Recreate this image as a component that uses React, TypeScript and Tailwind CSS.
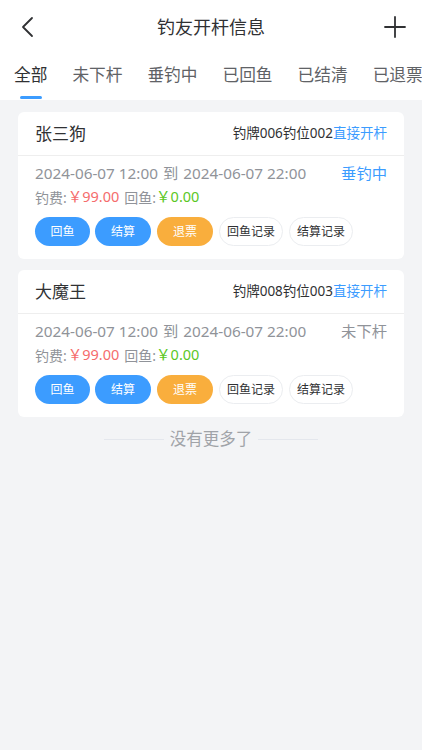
import React from "react";

const font = { fontFamily: '"Noto Sans", "Noto Sans CJK SC", sans-serif' };

function Card({ name, info, status, statusClass }: { name: string; info: string; status: string; statusClass: string }) {
  return (
    <div className="mx-[18px] bg-white rounded-md">
      <div className="h-[44px] flex items-center justify-between px-[17px] border-b border-[#eeeeee]">
        <span className="text-[17px] text-[#303133]">{name}</span>
        <span className="text-[13.5px] text-[#303133]">
          {info}
          <span className="text-[#3c9cff]">直接开杆</span>
        </span>
      </div>
      <div className="px-[17px] pt-[6px] pb-[13px]">
        <div className="flex items-center justify-between h-[22px] text-[15.3px] text-[#909399]">
          <span>
            2024-06-07 12:00<span className="mx-[5px]">到</span>2024-06-07 22:00
          </span>
          <span className={statusClass}>{status}</span>
        </div>
        <div className="h-[26px] flex items-center text-[14px] text-[#909399]">
          <span>钓费:</span>
          <span className="text-[#f56c6c] ml-[1px] text-[14.5px]">￥99.00</span>
          <span className="ml-[5px]">回鱼:</span>
          <span className="text-[#5ac725] text-[14.5px]">￥0.00</span>
        </div>
        <div className="flex mt-[7px]">
          <button className="h-[29px] w-[55px] rounded-full bg-[#3c9cff] text-white text-[12px]">回鱼</button>
          <button className="ml-[5px] h-[29px] w-[56px] rounded-full bg-[#3c9cff] text-white text-[12px]">结算</button>
          <button className="ml-[6px] h-[29px] w-[56px] rounded-full bg-[#f9ae3d] text-white text-[12px]">退票</button>
          <button className="ml-[6px] h-[29px] w-[64px] rounded-full border border-[#ebedf0] text-[#303133] text-[12px]">回鱼记录</button>
          <button className="ml-[6px] h-[29px] w-[64px] rounded-full border border-[#ebedf0] text-[#303133] text-[12px]">结算记录</button>
        </div>
      </div>
    </div>
  );
}

export default function App() {
  const tabs = ["全部", "未下杆", "垂钓中", "已回鱼", "已结清", "已退票"];
  return (
    <div className="w-[422px] h-[750px] bg-[#f3f4f6] overflow-hidden" style={font}>
      <div className="bg-white">
        <div className="h-[54px] flex items-center justify-between px-[20px] relative">
          <svg width="16" height="22" viewBox="0 0 16 22">
            <path d="M12 2 L3 11 L12 20" fill="none" stroke="#303133" strokeWidth="1.8" strokeLinecap="round" strokeLinejoin="round" />
          </svg>
          <span className="absolute left-0 right-0 text-center text-[18px] text-[#303133] pointer-events-none">钓友开杆信息</span>
          <svg width="22" height="22" viewBox="0 0 22 22" className="mr-[-4px]">
            <path d="M11 1 V21 M1 11 H21" stroke="#303133" strokeWidth="1.8" strokeLinecap="round" />
          </svg>
        </div>
        <div className="h-[46px] flex items-start pl-[14px] gap-[25px] whitespace-nowrap overflow-hidden">
          {tabs.map((t, i) => (
            <div key={t} className="flex flex-col items-center shrink-0">
              <span className={`text-[16.7px] leading-[42px] ${i === 0 ? "text-[#303133]" : "text-[#606266]"}`}>{t}</span>
              {i === 0 && <div className="w-[22px] h-[3px] rounded-full bg-[#3c9cff]" />}
            </div>
          ))}
        </div>
      </div>
      <div className="pt-[12px] flex flex-col gap-[11px]">
        <Card name="张三狗" info="钓牌006钓位002" status="垂钓中" statusClass="text-[#3c9cff]" />
        <Card name="大魔王" info="钓牌008钓位003" status="未下杆" statusClass="text-[#909399]" />
      </div>
      <div className="flex items-center justify-center mt-[9px] h-[26px]">
        <div className="w-[60px] h-px bg-[#e4e7ed]" />
        <span className="mx-[6px] text-[16.5px] text-[#a0a3a8]">没有更多了</span>
        <div className="w-[60px] h-px bg-[#e4e7ed]" />
      </div>
    </div>
  );
}
